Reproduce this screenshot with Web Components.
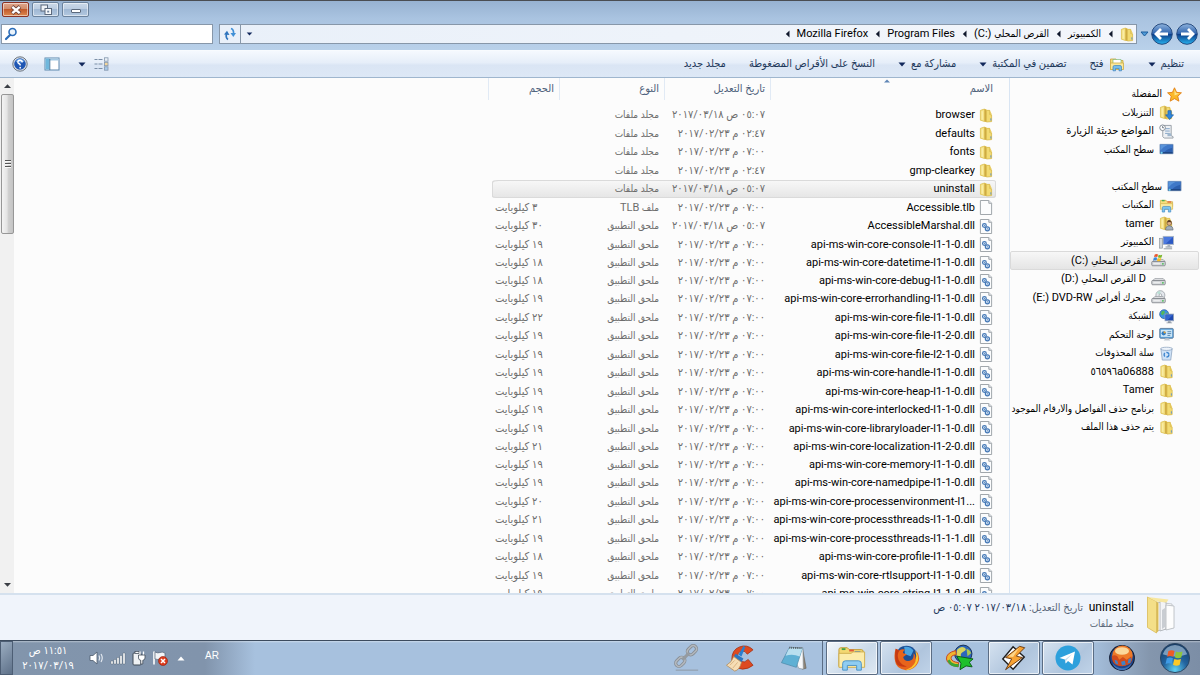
<!DOCTYPE html>
<html lang="ar" dir="rtl">
<head>
<meta charset="utf-8">
<title>uninstall</title>
<style>
  html, body { margin: 0; height: 100%; }
  body {
    overflow: hidden;
    font-family: Roboto, "DejaVu Sans Condensed", "DejaVu Sans", sans-serif;
    font-size: 11px;
    line-height: 18px;
    color: #000;
    --ar-size: 10px;
  }
</style>
</head>
<body>
<explorer-window></explorer-window>

<script>
const dllDoc = `<path d="M1.5.5h9l3 3v12h-12z" fill="#fbfcfd" stroke="#9aa0a6"/><path d="M10.5.5v3h3" fill="#e4e8ec" stroke="#9aa0a6"/>`;
const folderBody = `
  <path d="M1.500 2.500L6 1h2v1.500h3.500L13.500 6v8.500L8 15l-2-.5-4.500-1.500z" fill="#ecd068"/>
  <path d="M1.500 2.500L6 1v13.500L1.500 13z" fill="#f5e285" stroke="#dcc25c" stroke-width=".8"/>
  <path d="M6 1l2 1.500V15l-2-.5z" fill="#cfab42"/>
  <path d="M8 2.500h3.500V7L13.500 7.500v7L8 15z" fill="#f2da72" stroke="#d7ba50" stroke-width=".8"/>
  <path d="M3.500 3.500v9" stroke="#fbf0b4" stroke-width="1"/>
  <path d="M12.700 11v2.500" stroke="#5f93c9" stroke-width="1"/>`;
const monitor = `
  <path d="M1 2.500h14v10H1z" fill="#2c5fae" stroke="#7d97b8" stroke-width=".8"/>
  <path d="M1.500 3h13v3q-6 1-9 5h-4z" fill="#3f78c8"/>
  <path d="M1.500 3h8q-5 2-8 6z" fill="#5b95da"/>
  <path d="M1.500 11h13v1.200h-13z" fill="#1a3c74"/><circle cx="2.800" cy="11.500" r="1.200" fill="#6fd0ef"/>`;
const drive = `<path d="M2 9l2-2h9l2 2z" fill="#e8eaec" stroke="#8b9096" stroke-width=".7"/><rect x=".8" y="9" width="14.400" height="4.600" rx="1" fill="#d3d6d9" stroke="#757a80" stroke-width=".8"/><path d="M2.500 11.500h7" stroke="#f7f8f9"/><circle cx="12.700" cy="11.500" r=".9" fill="#3fbf4a"/>`;

const ICONS = {
  folder: ['0 0 15 16', folderBody],
  file: ['0 0 15 16', dllDoc],
  dll: ['0 0 15 16', dllDoc + `
    <circle cx="5.800" cy="7" r="2" fill="#e3eefa" stroke="#4377b5" stroke-width="1.300"/>
    <circle cx="9" cy="10.500" r="2.200" fill="#e3eefa" stroke="#4377b5" stroke-width="1.300"/>
    <circle cx="5.800" cy="7" r=".6" fill="#4377b5"/><circle cx="9" cy="10.500" r=".7" fill="#4377b5"/>`],
  star: ['0 0 16 16', `<path d="M8 .8l2.200 4.900 5.200.5-3.900 3.600 1.200 5.300L8 12.400l-4.700 2.700 1.200-5.300L.6 6.200l5.200-.5z" fill="#fbb829" stroke="#e07d12" stroke-width=".9"/><path d="M8 2.600l1.600 3.800 3.600.4L8 9z" fill="#fde58c"/>`],
  downloads: ['0 0 16 16', folderBody + `<path d="M9.500 6h3.500v4.500h2.500L11.300 15.500 7 10.500h2.500z" fill="#2f86dc" stroke="#165aa6" stroke-width=".7"/>`],
  recent: ['0 0 16 16', `<path d="M4 1.500h9v11l2 1v1.500H5.500L4 13.500z" fill="#eef1f4" stroke="#8d959e" stroke-width=".9"/><path d="M6.500 5h5M6.500 7.500h5M6.500 10h5" stroke="#7fa1c4"/><circle cx="3.800" cy="4" r="3" fill="#fff" stroke="#7e8791"/><path d="M3.800 2.300V4h1.500" fill="none" stroke="#44505e" stroke-width=".8"/><rect x="9" y="10" width="4" height="3" fill="#9fb6cc"/>`],
  desktop: ['0 0 16 16', monitor],
  libraries: ['0 0 16 16', `<path d="M1.500 2.500h6l1 1.500h6v5h-13z" fill="#f7df7e" stroke="#cfae45" stroke-width=".8"/><path d="M3 2h3v1.500H3z" fill="#4fae50"/><path d="M9 3.500h4V5H9z" fill="#e46a3c"/><path d="M1.500 6h13v6h-13z" fill="#fbeaa0" stroke="#d7b850" stroke-width=".8"/><path d="M3.500 15V10.500q0-1.500 1.500-1.500h6q1.500 0 1.500 1.500V15H10v-3H6v3z" fill="#7cc4ee" stroke="#4088c4" stroke-width=".7"/>`],
  user: ['0 0 16 16', folderBody + `<circle cx="11" cy="7.500" r="2.500" fill="#dfae84" stroke="#6c4c33" stroke-width=".7"/><path d="M8.700 7q.3-2.800 2.500-2.600T13.300 7q-2.300-1.200-4.600 0z" fill="#5d3d24"/><path d="M7 15q0-4.500 4-4.500T15 15z" fill="#a3afbb" stroke="#55616e" stroke-width=".6"/>`],
  computer: ['0 0 16 16', `<rect x="4.500" y="1.500" width="11" height="8.500" fill="#2b58c4" stroke="#aab6c6"/><path d="M5 2h10L7 9.500H5z" fill="#4b79de"/><path d="M9 10.500h3V12h2v1.500H7V12h2z" fill="#aab3bd"/><rect x=".7" y="3.500" width="3" height="10.500" fill="#cfd5db" stroke="#868f99" stroke-width=".7"/><path d="M5 14.700h9" stroke="#8a939d"/>`],
  cdrive: ['0 0 16 16', drive + `<path d="M4 1.500q2-1 3.500 0L6.700 4.300q-1.500-.8-3.500 0z" fill="#e8562a"/><path d="M8.200 1.800q1.800 1 3.800 0l-.8 3q-1.800.8-3.800-.2z" fill="#79b82c"/><path d="M3 5q2-.9 3.500 0L5.700 8q-1.500-.8-3.500 0z" fill="#3b88d8"/><path d="M7.200 5.400q1.800 1 3.800 0l-.8 3q-1.800.8-3.800-.2z" fill="#f8be22"/>`],
  drive: ['0 0 16 16', drive],
  dvd: ['0 0 16 16', `<circle cx="10" cy="5.500" r="4.800" fill="#e3e7ec" stroke="#969ca3" stroke-width=".8"/><path d="M10 5.500L6 3q1.500-2 4-2z" fill="#b9e0d5"/><circle cx="10" cy="5.500" r="1.400" fill="#fff" stroke="#8c9299" stroke-width=".7"/>` + drive],
  network: ['0 0 16 16', `<circle cx="5.500" cy="5.500" r="4.800" fill="#3d8fe0" stroke="#20599f" stroke-width=".7"/><path d="M3 2.500q2-1.500 3 0T5 5.500 3.500 7 2 5z" fill="#55b85a"/><path d="M7 5l2-1.500V6z" fill="#55b85a"/><rect x="6.500" y="5.500" width="9" height="7" fill="#1f49b0" stroke="#8fa0b8"/><path d="M7 6h8l-6 6H7z" fill="#3566d0"/><path d="M9.500 13h3v1.300h1.500v1H8v-1h1.500z" fill="#8e98a3"/>`],
  control: ['0 0 16 16', `<rect x=".8" y="1.500" width="14.400" height="10.500" rx="1" fill="#5aa3dc" stroke="#5f7f9f"/><rect x="2" y="3" width="12" height="7.500" fill="#cde7f8"/><circle cx="5" cy="6.700" r="2.300" fill="#2e7bc4"/><path d="M5 6.700V4.400a2.300 2.300 0 0 1 2.300 2.300z" fill="#f3a52a"/><path d="M9 5h4M9 7h4M9 9h3" stroke="#3a6f9f" stroke-width=".8"/><path d="M5 14.500l2-2.500h3l2 2.500z" fill="#c2cad2"/>`],
  bin: ['0 0 16 16', `<path d="M2 3l1.500 12h9L14 3z" fill="#cfe2f7" stroke="#8ba2bd" stroke-width=".8"/><ellipse cx="8" cy="3" rx="6.300" ry="1.700" fill="#eef4fb" stroke="#8ba2bd" stroke-width=".8"/><circle cx="8" cy="9.300" r="2.500" fill="none" stroke="#3f86cf" stroke-width="1.500" stroke-dasharray="3.600 1.600"/>`],
  openfolder: ['0 0 16 16', `<path d="M1.500 3h5.500l1 1.500h6v9H1.500z" fill="#f5dd7d" stroke="#c9a53d" stroke-width=".8"/><path d="M4 3.500h8V8H4z" fill="#fff" stroke="#6db06c" stroke-width=".6"/><path d="M1.500 7h13v6.500h-13z" fill="#fae89c" stroke="#cfae48" stroke-width=".8"/><path d="M4 14.800V11q0-1.500 1.500-1.500h5.500q1.500 0 1.500 1.500v3.800H10V12.500H6.500v2.300z" fill="#76bdea" stroke="#3d82bb" stroke-width=".7"/>`],
  search: ['0 0 14 14', `<circle cx="8.500" cy="5" r="3.500" fill="#eaf3fb" stroke="#2b6cb8" stroke-width="1.600"/><path d="M6 8L2 12" stroke="#2b6cb8" stroke-width="2.200" stroke-linecap="round"/>`],
  refresh: ['0 0 14 14', `<path d="M5 12.500Q2.500 11 3.500 6.500" fill="none" stroke="#2f74bd" stroke-width="1.700"/><path d="M1 7.500L4 3.800 6.500 8z" fill="#2f74bd"/><path d="M8 1.500q3 1 2.500 5.500" fill="none" stroke="#3f8fd6" stroke-width="1.700"/><path d="M7.500 6L10.300 10 13 6z" fill="#3f8fd6"/>`],
  help: ['0 0 16 16', `<circle cx="8" cy="8" r="7.200" fill="#dfe3e8" stroke="#6b7581"/><circle cx="8" cy="8" r="5.800" fill="#1f56b3"/><path d="M3.500 5.500a5 5 0 0 1 9 0q-4.500 2-9 0z" fill="#6ca3e6"/><path d="M10.300 6.300Q10 4.300 8 4.300T5.800 6Q6 7.300 7.200 7.800T8.200 9.500" fill="none" stroke="#fff" stroke-width="1.500"/><circle cx="8.200" cy="11.700" r=".9" fill="#fff"/>`],
  pane: ['0 0 16 14', `<rect x="1" y="1" width="14" height="12" fill="#fff" stroke="#5c87ad"/><path d="M1.500 1.500h13v2h-13z" fill="#a5c9e3"/><path d="M1.500 1.500h4v11h-4z" fill="#6fb7dc"/><path d="M5.800 2v11" stroke="#4b7b9f"/>`],
  views: ['0 0 15 14', `<g stroke="#7b8ea6"><path d="M.5 2.500h3M4.500 2.500h4M.5 7h3M4.500 7h4M.5 11.500h3M4.500 11.500h4"/></g><g fill="#e8eff6" stroke="#8497ad" stroke-width=".8"><rect x="10.500" y=".8" width="3.500" height="3.400"/><rect x="10.500" y="5.300" width="3.500" height="3.400" fill="#f3d59a"/><rect x="10.500" y="9.800" width="3.500" height="3.400" fill="#a9cbea"/></g>`],
  down: ['0 0 8 5', `<path d="M.5.5h7L4 4.500z" fill="#12285c"/>`],
  downBlue: ['0 0 9 6', `<path d="M1 1h7L4.500 5z" fill="#4f9bd8" stroke="#1d5d9c"/>`],
  crumb: ['0 0 5 8', `<path d="M4.500.5v7L.8 4z" fill="#10182c"/>`],
  back: ['0 0 24 24', `<defs><linearGradient id="g" x1="0" y1="0" x2="0" y2="1"><stop offset="0" stop-color="#8fb3dd"/><stop offset=".48" stop-color="#2f64ae"/><stop offset=".5" stop-color="#0b3a86"/><stop offset="1" stop-color="#28b2ee"/></linearGradient></defs><circle cx="12" cy="12" r="11" fill="#c8d8ea"/><circle cx="12" cy="12" r="10.300" fill="url(#g)" stroke="#234a80"/><path d="M11 7L6 12l5 5M6.500 12H18" fill="none" stroke="#fff" stroke-width="2.800"/>`],
  close: ['0 0 14 12', `<path d="M3 2.500l8 7M11 2.500l-8 7" stroke="#6d4038" stroke-width="4"/><path d="M3.300 2.800l7.400 6.400M10.700 2.800L3.300 9.200" stroke="#fff" stroke-width="2.400"/>`],
  restore: ['0 0 14 12', `<rect x="2" y="1" width="6.500" height="6" fill="#eef2f7" stroke="#5b697c"/><rect x="6" y="4.500" width="6.500" height="6" fill="#f7f9fb" stroke="#5b697c"/><rect x="8.200" y="6.700" width="2" height="1.800" fill="#6f8099"/>`],
  minimize: ['0 0 14 12', `<rect x="2.500" y="5.500" width="9" height="3" rx=".5" fill="#fff" stroke="#5b697c"/>`],
  bigFolder: ['0 0 30 38', `
    <path d="M9 6l17 2v24L10 35z" fill="#fff" stroke="#b9bdc2" stroke-width=".8"/>
    <path d="M14 5l6 1v27l-6 2z" fill="#f3f4f6" stroke="#a8adb3" stroke-width=".8"/>
    <path d="M20 9l8 1v22l-8 2z" fill="#fdfdfd" stroke="#b3b7bc" stroke-width=".8"/>
    <path d="M16 14l3-2v19l-3 2z" fill="#c9cdd2"/>
    <path d="M1.500 1l9 4.500V37l-9-5.500z" fill="#f4df88" stroke="#dcc062" stroke-width=".9"/>
    <path d="M1.500 1l21 2.500-2 3-10-1z" fill="#f7e7a0"/><path d="M10.500 6l2 .5V35l-2 2z" fill="#d8ba56"/>`],
  orb: ['0 0 34 34', `<defs><radialGradient id="o" cx=".5" cy=".9" r=".9"><stop offset="0" stop-color="#5fd2f4"/><stop offset=".45" stop-color="#23649f"/><stop offset="1" stop-color="#173a63"/></radialGradient></defs><circle cx="17" cy="17" r="15.500" fill="url(#o)" stroke="#2c4561"/><path d="M4 13a13.500 13.500 0 0 1 26 0q-13 5-26 0z" fill="#b9d2e6" opacity=".6"/>
    <path d="M10 9.500q3.500-1.700 6.500 0l-1.300 6.200q-3-1.500-6.500 0z" fill="#ee5b27"/><path d="M18 10.200q3 1.600 7 0L23.700 16.500q-3.500 1.600-7-.2z" fill="#8ec63d"/><path d="M8.300 17.200q3.500-1.600 6.500 0l-1.400 6.300q-3-1.600-6.400 0z" fill="#3f9be6"/><path d="M16.300 18q3.500 1.700 7 0l-1.400 6.400q-3.500 1.500-7-.2z" fill="#fdc928"/>`],
  foxblue: ['0 0 30 30', `<circle cx="15" cy="15" r="13.200" fill="#20458a" stroke="#131d33" stroke-width="1.200"/><circle cx="15.500" cy="12.500" r="11" fill="#ee7a28"/><ellipse cx="15" cy="7.500" rx="7.500" ry="4" fill="#fbd79a"/><path d="M4 13q3-2 6 0l2 4 4-3 4 3 5-4q1.500 6-2 8.500-7 4-14 1Q4 19.500 4 13z" fill="#d14a1b"/><path d="M7 17l3 1 1 4-3-1zM14 19l4-1 1 4-4 1zM22 16l3-1-1 5-3 1z" fill="#3f83c9"/><path d="M5 21q4 5 10 5t10-5q-2 7-10 7T5 21z" fill="#3d74bb"/>`],
  telegram: ['0 0 28 28', `<circle cx="14" cy="14" r="12.500" fill="#2da0dc"/><path d="M5.500 14L21 7.500 18.500 20.500 14 17l-2.300 2.500-.8-4z" fill="#fff"/><path d="M10.900 15.500L18.500 9.800 12.500 16l-.8 3.500z" fill="#c3dcec"/>`],
  winamp: ['0 0 30 30', `<path d="M14 3l12 11-12 13L3 16z" fill="#fff" stroke="#1d1d1d" stroke-width="1.500"/><path d="M21 2.500L6 14.500l6.500 1.500L6 27.500 24 14.500l-6.500-1.500L26.500 4z" fill="#f7a233" stroke="#5b2b07" stroke-width=".9"/><path d="M20.500 4L9 13.500l5 .5z" fill="#fcd58a"/>`],
  idm: ['0 0 32 30', `<circle cx="19.500" cy="10.500" r="9.300" fill="#2c66bb" stroke="#142b50"/><path d="M13 6q4-4.500 8-2 3 2-1 4t-3 5-5-1z" fill="#d8d35c"/><path d="M23 5q4 1 5 5l-4 3z" fill="#a8c553"/><path d="M11.500 7Q1 9.500 1.500 16T14 24.500l.5-4.500Q7 19 6.500 15.500T12 11.500z" fill="#f0b52e" stroke="#c7401e" stroke-width="1"/><path d="M2.500 18q3 7.500 12 6.500v-3q-8 0-9.500-5z" fill="#3aa637"/><path d="M12.500 13L30 16l-4 3.500 3 5-6.500-1L16 27.500 17 21z" fill="#1ec02c" stroke="#0a5a12"/>`],
  firefox: ['0 0 30 30', `<circle cx="15.500" cy="14" r="12" fill="#1c4f95"/><path d="M13 3q7-1 10 4l-3 6-6-2z" fill="#4aa3e0"/><path d="M4 5l4 2q2-2 6-1-3 2-2 4l4 1-4 3q1 5 7 4 5-1 4-8 3 2 2 7 3-4 1-10 5 7 2 13-4 8-13 8Q4 27 3 17 2 10 4 5z" fill="#e8641b"/><path d="M25 7q5 7 2 13-4 8-13 8 9-3 11-9t0-12z" fill="#fbc62f"/><path d="M4 5l4 2q-3 4-1 10 3 6 9 7Q4 26 3.500 16 3 9 4 5z" fill="#c63a12"/>`],
  explorer: ['0 0 32 30', `<path d="M2 6q0-2 2-2h7l2 2h13q2 0 2 2v16H2z" fill="#f3d872" stroke="#c19a35"/><path d="M5 4.500h4v2H5z" fill="#43a047"/><path d="M13 6h5v2h-5z" fill="#e25a3a"/><path d="M19 7.500h6v2h-6z" fill="#4a90d9"/><path d="M2 10h13l2-1.500h12.500V25H2z" fill="#fcecaa" stroke="#cfae4c"/><path d="M6 28v-7q0-3 3-3h14q3 0 3 3v7h-5v-5H11v5z" fill="#8fcdf2" stroke="#4a90c4"/>`],
  notepad: ['0 0 30 30', `<path d="M24 4l4 22-4 1z" fill="#8f8678" stroke="#5f594f" stroke-width=".6"/><path d="M10 3.500L24.500 4 25 27 20 26z" fill="#f7f8f9" stroke="#8b9298" stroke-width=".7"/><path d="M10 4l14 .5L17.500 25 1.500 20z" fill="#5fb0d4" stroke="#4a86a4" stroke-width=".7"/><path d="M10 4l14 .5-3 9Q14 10 6 12.500z" fill="#b9dfef"/><path d="M10 4l14 .5" stroke="#52575c" stroke-width="2" stroke-dasharray="1 1"/>`],
  ccleaner: ['0 0 30 30', `<path d="M28 6Q22 0 14 3T6 16q2 9 11 10 6 0 11-4l-5-6q-4 4-7 2-4-2-4-6t4-4.500q4-1 6 3z" fill="#dd4a21" stroke="#a52f0f" stroke-width=".8"/><path d="M20 3l-4 10-3-2 5-9z" fill="#2a7fd0"/><path d="M10 10l8 5-2 4-8-6z" fill="#2b76c2"/><path d="M8 13l8 6q-2 8-7 9L.500 22Q6 19 8 13z" fill="#f6ddb5" stroke="#b58b55" stroke-width=".8"/><path d="M4 22l5-5M7 25l5-6" stroke="#d3a972" stroke-width=".8"/>`],
  link: ['0 0 30 30', `<g fill="none" stroke="#878d94" stroke-width="3.400"><rect x="-5" y="-3.500" width="11" height="7" rx="3.500" transform="translate(21 7) rotate(-45)"/><rect x="-5" y="-3.500" width="11" height="7" rx="3.500" transform="translate(8.500 19.500) rotate(-45)"/></g><g fill="none" stroke="#b3b8bd" stroke-width="1.600"><rect x="-5" y="-3.500" width="11" height="7" rx="3.500" transform="translate(21 7) rotate(-45)"/><rect x="-5" y="-3.500" width="11" height="7" rx="3.500" transform="translate(8.500 19.500) rotate(-45)"/></g><path d="M11 17l7-7" stroke="#959ba1" stroke-width="3.400"/><path d="M4 28h24" stroke="#8d97a3" stroke-width="1"/>`],
  speaker: ['0 0 16 16', `<path d="M1 5.500h3L8 2v12L4 10.500H1z" fill="#fff" stroke="#4d5b6c" stroke-width=".8"/><path d="M10 5.500q1.500 2.500 0 5M12 4q2.500 4 0 8" fill="none" stroke="#e9eef4" stroke-width="1.100"/>`],
  signal: ['0 0 16 16', `<g fill="#fff" stroke="#4d5b6c" stroke-width=".4"><path d="M1 11h2v3H1zM4 9.500h2V14H4zM7 7.500h2V14H7zM10 5.500h2V14h-2zM13 3h2v11h-2z"/></g>`],
  plug: ['0 0 16 16', `<rect x="2" y="3" width="8" height="12" rx="1" fill="#eef1f4" stroke="#3f4a57"/><rect x="4" y="1.500" width="4" height="1.800" fill="#fff" stroke="#3f4a57" stroke-width=".7"/><path d="M9 1.500V5M12.500 1.500V5" stroke="#fff" stroke-width="1.300"/><path d="M7.500 5h6.500v3q0 2-2.200 2.300V14H9.800v-3.700Q7.500 10 7.500 8z" fill="#fff" stroke="#3f4a57" stroke-width=".8"/>`],
  flag: ['0 0 16 16', `<path d="M2 1.500v13" stroke="#fff" stroke-width="1.600"/><path d="M3 2q3 1.500 5 .5t5 .5v6.500q-3-1.500-5-.5T3 9z" fill="#f3f5f8" stroke="#566477" stroke-width=".7"/><circle cx="11" cy="11" r="4.500" fill="#dd3b1c" stroke="#8f1f0b" stroke-width=".6"/><path d="M9 9l4 4M13 9l-4 4" stroke="#fff" stroke-width="1.500"/>`],
  up: ['0 0 8 5', `<path d="M.5 4.500h7L4 .5z" fill="#fff"/>`],
  scrollUp: ['0 0 7 4', `<path d="M0 4h7L3.500.3z" fill="#3b3f45"/>`],
  scrollDown: ['0 0 7 4', `<path d="M0 0h7L3.500 3.700z" fill="#3b3f45"/>`],
  sort: ['0 0 6 4', `<path d="M0 3.500h6L3 .5z" fill="#5f86b5"/>`],
};

const define = (name, html, setup) => {
  const template = document.createElement('template');
  template.innerHTML = html;
  customElements.define(name, class extends HTMLElement {
    constructor() {
      super();
      this.attachShadow({ mode: 'open' }).append(template.content.cloneNode(true));
    }
    connectedCallback() { if (setup && !this.ready) { this.ready = true; setup(this, this.shadowRoot); } }
  });
};

/* <ui-icon name="…" w="16" h="16"> */
define('ui-icon', `<style>
  :host { display: inline-flex; flex: none; direction: ltr; }
  svg { display: block; }
</style>`, (el, root) => {
  const [box, body] = ICONS[el.getAttribute('name')] || ['0 0 1 1', ''];
  const w = el.getAttribute('w') || 16, h = el.getAttribute('h') || w;
  root.innerHTML += `<svg viewBox="${box}" width="${w}" height="${h}" aria-hidden="true">${body}</svg>`;
});

define('title-bar', `<style>
  :host { display: block; }
  div { display: flex; flex-direction: row; justify-content: flex-end; gap: 3px; padding: 1px 2px 0; border-top: 1px solid #4a4d52; }
  button { display: flex; align-items: center; justify-content: center; width: 27px; height: 15px; padding: 0;
    border: 1px solid #6b829c; border-radius: 2px; box-shadow: inset 0 0 0 1px #ffffff80;
    background: linear-gradient(#cbd9e9, #b9cbe0 48%, #a0b8d4 50%, #b3c8df); }
  .close { border-color: #8a3325; background: linear-gradient(#e0a68d, #d08a68 48%, #c25a2c 50%, #dd8a50); }
</style>
<div>
  <button aria-label="تصغير"><ui-icon name="minimize" w="14" h="12"></ui-icon></button>
  <button aria-label="استعادة"><ui-icon name="restore" w="14" h="12"></ui-icon></button>
  <button class="close" aria-label="إغلاق"><ui-icon name="close" w="14" h="12"></ui-icon></button>
</div>`);

define('address-bar', `<style>
  :host { display: flex; align-items: center; gap: 6px; padding: 5px 1px 4px 1px; }
  button { font: inherit; color: inherit; background: none; border: 0; padding: 0; display: flex; align-items: center; justify-content: center; }
  .travel { display: flex; align-items: center; gap: 1px; margin-inline-end: -3px; }
  .travel .fwd { transform: scaleX(-1); }
  .path, .search { display: flex; align-items: center; box-sizing: border-box; height: 20px; border: 1px solid #8797a9; }
  .path { flex: 1; background: linear-gradient(90deg, #e9f0f9, #f3f6fb); padding-inline-start: 2px; }
  ol { display: flex; align-items: center; list-style: none; margin: 0; padding: 0; flex: 1; }
  li { display: flex; align-items: center; gap: 7px; margin-inline-end: 7px; }
  .ar { font-size: var(--ar-size); }
  .path > button { width: 16px; height: 18px; }
  .path > .refresh { width: 21px; border-left: 0; border-right: 1px solid #8797a9; }
  .search { width: 212px; background: #fff; padding-inline-end: 2px; }
  input { flex: 1; min-width: 0; border: 0; outline: 0; background: none; font: inherit; padding: 0 4px; }
</style>
<div class="travel">
  <button class="fwd" aria-label="للأمام"><ui-icon name="back" w="24"></ui-icon></button>
  <button aria-label="للخلف"><ui-icon name="back" w="24"></ui-icon></button>
  <button class="recent" aria-label="المواقع الأخيرة"><ui-icon name="downBlue" w="9" h="6"></ui-icon></button>
</div>
<div class="path">
  <ol>
    <li><ui-icon name="folder" w="14" h="15"></ui-icon><ui-icon name="crumb" w="5" h="8"></ui-icon></li>
    <li><button class="ar">الكمبيوتر</button><ui-icon name="crumb" w="5" h="8"></ui-icon></li>
    <li><button><span><span class="ar">القرص المحلي</span> <bdi dir="ltr">(C:)</bdi></span></button><ui-icon name="crumb" w="5" h="8"></ui-icon></li>
    <li><button>Program Files</button><ui-icon name="crumb" w="5" h="8"></ui-icon></li>
    <li><button>Mozilla Firefox</button><ui-icon name="crumb" w="5" h="8"></ui-icon></li>
  </ol>
  <button aria-label="المواقع السابقة"><ui-icon name="down" w="7" h="4"></ui-icon></button>
  <button class="refresh" aria-label="تحديث"><ui-icon name="refresh" w="14"></ui-icon></button>
</div>
<label class="search">
  <input type="text" aria-label="بحث"><ui-icon name="search" w="14"></ui-icon>
</label>`);

define('command-bar', `<style>
  :host { display: flex; align-items: center; height: 26px; padding: 0 16px 0 12px; color: #1e395b;
    border-top: 1px solid #f8fbfe; border-bottom: 1px solid #9fb6ce; background: linear-gradient(#f5f9fe, #e6eef9 45%, #dae5f4 55%, #dde8f6); }
  button { display: flex; align-items: center; gap: 5px; font: inherit; color: inherit; background: none; border: 0; padding: 0; }
  .left { display: flex; align-items: center; margin-inline-start: auto; }
  .cmd { margin-inline-end: 23px; }
  .views { margin-inline: 8px 18px; }
  .pane { margin-inline-end: 16px; }
</style>
<button class="cmd">تنظيم<ui-icon name="down" w="8" h="5"></ui-icon></button>
<button class="cmd"><ui-icon name="openfolder" w="16"></ui-icon>فتح</button>
<button class="cmd">تضمين في المكتبة<ui-icon name="down" w="8" h="5"></ui-icon></button>
<button class="cmd">مشاركة مع<ui-icon name="down" w="8" h="5"></ui-icon></button>
<button class="cmd">النسخ على الأقراص المضغوطة</button>
<button class="cmd">مجلد جديد</button>
<div class="left">
  <button aria-label="طريقة العرض"><ui-icon name="views" w="15" h="14"></ui-icon></button>
  <button class="views" aria-label="خيارات العرض"><ui-icon name="down" w="8" h="5"></ui-icon></button>
  <button class="pane" aria-label="جزء المعاينة"><ui-icon name="pane" w="16" h="14"></ui-icon></button>
  <button aria-label="تعليمات"><ui-icon name="help" w="16"></ui-icon></button>
</div>`);

/* One entry of the navigation tree; depth sets the indent. */
define('tree-item', `<style>
  :host { display: block; height: 18px; }
  :host(:nth-child(even)) { height: 19px; }
  a { display: flex; align-items: center; gap: 5px; height: 100%; box-sizing: border-box; margin: 0 1px 0 0;
    padding-inline-start: 16px; color: #000; text-decoration: none; white-space: nowrap; border: 1px solid transparent; }
  :host([depth="2"]) a { padding-inline-start: 24px; }
  :host([depth="3"]) a { padding-inline-start: 32px; }
  :host([selected]) a { border-color: #dadada; border-radius: 2px; background: linear-gradient(#f7f7f7, #e5e5e5); }
</style><a href="#"><slot name="icon"></slot><span><slot></slot></span></a>`);

define('nav-tree', `<style>
  :host { display: block; overflow: hidden; background: #fcfcfc; border-left: 1px solid #d9e5f3; padding-top: 7px; }
  .gap { height: 18px; }
  .ar { font-size: var(--ar-size); }
</style><nav aria-label="جزء التنقل"></nav>`, (el, root) => {
  const ar = t => `<span class="ar">${t}</span>`;
  const items = [
    [1, 'star', ar('المفضلة')], [2, 'downloads', ar('التنزيلات')],
    [2, 'recent', 'المواضع حديثة الزيارة'], [2, 'desktop', ar('سطح المكتب')], null,
    [1, 'desktop', ar('سطح المكتب')], [2, 'libraries', ar('المكتبات')], [2, 'user', 'tamer'],
    [2, 'computer', ar('الكمبيوتر')],
    [3, 'cdrive', ar('القرص المحلي') + ' <bdi dir="ltr">(C:)</bdi>', true],
    [3, 'drive', 'D ' + ar('القرص المحلي') + ' <bdi dir="ltr">(D:)</bdi>'],
    [3, 'dvd', ar('محرك أقراص') + ' <bdi dir="ltr">DVD-RW</bdi> <bdi dir="ltr">(E:)</bdi>'],
    [2, 'network', ar('الشبكة')], [2, 'control', ar('لوحة التحكم')], [2, 'bin', ar('سلة المحذوفات')],
    [2, 'folder', '<bdi dir="ltr">٥٦٥٩٦a06888</bdi>'], [2, 'folder', 'Tamer'],
    [2, 'folder', ar('برنامج حذف الفواصل والارقام الموجود')], [2, 'folder', ar('يتم حذف هذا الملف')],
  ];
  root.querySelector('nav').innerHTML = items.map(it => it
    ? `<tree-item depth="${it[0]}"${it[3] ? ' selected' : ''}><ui-icon slot="icon" name="${it[1]}" w="15"></ui-icon>${it[2]}</tree-item>`
    : '<div class="gap"></div>').join('');
});

define('file-list', `<style>
  :host { display: block; overflow: hidden; background: #fcfcfc; padding-inline-start: 13px; min-width: 0; }
  table { border-collapse: separate; border-spacing: 0; table-layout: fixed; width: 508px; }
  col.name { width: 226px; } col.date { width: 106px; } col.type { width: 105px; } col.size { width: 71px; }
  th { height: 22px; padding: 0 5px 0 0; text-align: start; font-weight: 400; color: #4c607a;
    border-left: 1px solid #e1eaf5; position: relative; }
  th:first-child { padding-right: 3px; }
  th ui-icon { position: absolute; top: 1px; left: 50%; }
  tbody::before { content: ""; display: block; height: 6px; }
  td { height: 18px; padding: 0 5px 0 0; white-space: nowrap; color: #6d6d6d; line-height: 18px; overflow: hidden; }
  tr:nth-child(even) td { height: 19px; }
  tr:nth-child(10n) td { height: 18px; }
  td:first-child { padding-right: 3px; color: #000; }
  td:nth-child(3) { font-size: var(--ar-size); }
  td:last-child { text-align: end; padding: 0 0 0 3px; border-left: 4px solid transparent; background-clip: padding-box; }
  .cell { display: flex; align-items: center; gap: 4px; }
  .lat { font-size: 11px; }
  .on td { background: linear-gradient(#f8f8f8, #e5e5e5) padding-box; box-shadow: inset 0 1px #dadada, inset 0 -1px #dadada; }
  .on td:first-child { border-radius: 0 3px 3px 0; box-shadow: inset 0 1px #dadada, inset -1px -1px #dadada; }
  .on td:last-child { border-radius: 6px 0 0 6px / 2px 0 0 2px; box-shadow: inset 1px 1px #dadada, inset 0 -1px #dadada; }
</style>
<table>
  <colgroup><col class="name"><col class="date"><col class="type"><col class="size"></colgroup>
  <thead><tr><th>الاسم<ui-icon name="sort" w="6" h="4"></ui-icon></th><th>تاريخ التعديل</th><th>النوع</th><th>الحجم</th></tr></thead>
  <tbody></tbody>
</table>`, (el, root) => {
  const A = '٠٥:٠٧ ص ٢٠١٧/٠٣/١٨', B = '٠٢:٤٧ م ٢٠١٧/٠٢/٢٣', C = '٠٧:٠٠ م ٢٠١٧/٠٢/٢٣';
  const F = 'مجلد ملفات', D = 'ملحق التطبيق', kb = n => n + ' كيلوبايت';
  const api = (n, s) => ['dll', 'api-ms-win-core-' + n, C, D, kb(s)];
  const rows = [
    ['folder', 'browser', A, F, ''], ['folder', 'defaults', B, F, ''], ['folder', 'fonts', C, F, ''],
    ['folder', 'gmp-clearkey', B, F, ''], ['folder', 'uninstall', A, F, ''],
    ['file', 'Accessible.tlb', C, 'ملف <bdi class="lat">TLB</bdi>', kb('٣')],
    ['dll', 'AccessibleMarshal.dll', A, D, kb('٣٠')],
    api('console-l1-1-0.dll', '١٩'), api('datetime-l1-1-0.dll', '١٨'), api('debug-l1-1-0.dll', '١٨'),
    api('errorhandling-l1-1-0.dll', '١٩'), api('file-l1-1-0.dll', '٢٢'), api('file-l1-2-0.dll', '١٩'),
    api('file-l2-1-0.dll', '١٩'), api('handle-l1-1-0.dll', '١٩'), api('heap-l1-1-0.dll', '١٩'),
    api('interlocked-l1-1-0.dll', '١٩'), api('libraryloader-l1-1-0.dll', '١٩'), api('localization-l1-2-0.dll', '٢١'),
    api('memory-l1-1-0.dll', '١٩'), api('namedpipe-l1-1-0.dll', '١٩'), api('processenvironment-l1...', '٢٠'),
    api('processthreads-l1-1-0.dll', '٢١'), api('processthreads-l1-1-1.dll', '١٩'), api('profile-l1-1-0.dll', '١٨'),
    api('rtlsupport-l1-1-0.dll', '١٩'), api('string-l1-1-0.dll', '١٩'),
  ];
  root.querySelector('tbody').innerHTML = rows.map(([icon, name, date, type, size]) =>
    `<tr class="${name === 'uninstall' ? 'on' : ''}"><td><div class="cell"><ui-icon name="${icon}" w="14" h="15"></ui-icon><bdi dir="ltr">${name}</bdi></div></td><td>${date}</td><td>${type}</td><td>${size}</td></tr>`).join('');
});

define('scroll-bar', `<style>
  :host { display: flex; flex-direction: column; width: 14px; background: #f1f1f1; box-sizing: border-box; padding: 0 0 0 1px; }
  button { flex: none; height: 16px; border: 0; padding: 0; background: none; display: flex; align-items: center; justify-content: center; }
  .track { flex: 1; min-height: 0; }
  .thumb { display: flex; flex-direction: column; gap: 1px; align-items: center; justify-content: center; height: 29%; box-sizing: border-box;
    border: 1px solid #979797; border-radius: 2px; background: linear-gradient(90deg, #f4f4f4, #e4e4e4 45%, #cfcfcf 60%, #c4c4c4); }
  i { width: 6px; height: 1px; background: #555; border-bottom: 1px solid #f8f8f8; }
</style>
<button aria-label="لأعلى"><ui-icon name="scrollUp" w="7" h="4"></ui-icon></button>
<div class="track"><div class="thumb"><i></i><i></i><i></i></div></div>
<button aria-label="لأسفل"><ui-icon name="scrollDown" w="7" h="4"></ui-icon></button>`);

define('details-pane', `<style>
  :host { display: flex; align-items: flex-start; gap: 12px; box-sizing: border-box; height: 47px; padding: 1px 24px 0; background: #f0f4fb;
    border-top: 2px solid #d5e1ee; }
  .text { padding-top: 3px; line-height: 16px; }
  .text p { margin: 0; color: #5a6779; }
  .text .kind { font-size: var(--ar-size); }
  b { font-weight: 400; font-size: 12px; color: #000; margin-inline-end: 3px; }
  em { font-style: normal; color: #1e395b; }
</style>
<ui-icon name="bigFolder" w="30" h="38"></ui-icon>
<div class="text">
  <p><b>uninstall</b> تاريخ التعديل: <em>٢٠١٧/٠٣/١٨ ٠٥:٠٧ ص</em></p>
  <p class="kind">مجلد ملفات</p>
</div>`);

define('task-button', `<style>
  :host { display: block; }
  button { display: flex; align-items: center; justify-content: center; width: 52px; height: 34px; padding: 0; border: 1px solid transparent; background: none; border-radius: 2px; }
  :host([start]) button { width: 50px; }
  :host([open]) button { border-color: #5b6d84; box-shadow: inset 0 0 0 1px #ffffffb0; background: linear-gradient(135deg, #d5e2f0, #b0c5dd 60%, #c0d3e8); }
  :host([active]) button { background: linear-gradient(135deg, #f3f7fb, #c9d9e9 60%, #dfe9f3); }
  :host([stack]) { padding-left: 3px; border-left: 1px solid #5b6d84; }
</style><button><slot></slot></button>`, (el, root) => root.querySelector('button').setAttribute('aria-label', el.title));

define('task-bar', `<style>
  :host { display: flex; box-sizing: border-box; height: 35px; color: #fff; border-top: 1px solid #3c4b5e;
    background: linear-gradient(#ffffff66, #ffffff00 2px),
      linear-gradient(90deg, #8295ac, #8194ac 205px, #a7c1de 255px, #a7c1de calc(100% - 110px), #8496ad calc(100% - 50px), #7c8ea6); }
  .tasks { display: flex; gap: 2px; }
  .tray { display: flex; align-items: center; margin-inline-start: auto; }
  button { border: 0; background: none; padding: 0; color: inherit; font: inherit; display: flex; }
  .icons { display: flex; align-items: center; gap: 5px; margin: 0 9px 0 6px; direction: ltr; }
  .lang { font: 10px/18px "Liberation Sans", sans-serif; padding-bottom: 4px; }
  .up { margin-inline-start: 20px; }
  .clock { width: 70px; text-align: center; line-height: 15px; }
  .show { align-self: stretch; width: 13px; border: 1px solid #4d5e74; background: linear-gradient(135deg, #9badc1, #5d7088); }
</style>
<div class="tasks">
  <task-button start title="ابدأ"><ui-icon name="orb" w="32"></ui-icon></task-button>
  <task-button title="Firefox Developer"><ui-icon name="foxblue" w="28"></ui-icon></task-button>
  <task-button open title="Telegram"><ui-icon name="telegram" w="28"></ui-icon></task-button>
  <task-button open title="Winamp"><ui-icon name="winamp" w="28"></ui-icon></task-button>
  <task-button title="Internet Download Manager"><ui-icon name="idm" w="30" h="28"></ui-icon></task-button>
  <task-button open title="Firefox"><ui-icon name="firefox" w="28"></ui-icon></task-button>
  <task-button open active stack title="Explorer"><ui-icon name="explorer" w="30" h="28"></ui-icon></task-button>
  <task-button title="Notepad"><ui-icon name="notepad" w="28"></ui-icon></task-button>
  <task-button title="CCleaner"><ui-icon name="ccleaner" w="29"></ui-icon></task-button>
  <task-button title="Link"><ui-icon name="link" w="28"></ui-icon></task-button>
</div>
<div class="tray">
  <button class="lang">AR</button>
  <button class="up" aria-label="إظهار الرموز المخفية"><ui-icon name="up" w="8" h="5"></ui-icon></button>
  <div class="icons">
    <ui-icon name="speaker"></ui-icon><ui-icon name="signal"></ui-icon><ui-icon name="plug"></ui-icon><ui-icon name="flag"></ui-icon>
  </div>
  <div class="clock">١١:٥١ ص<br>٢٠١٧/٠٣/١٩</div>
  <button class="show" aria-label="إظهار سطح المكتب"></button>
</div>`);

define('explorer-window', `<style>
  :host { display: flex; flex-direction: column; height: 100vh; background: linear-gradient(#96b1d0, #a9c3e0 18px, #b9d1ea 50px); }
  .main { display: flex; flex: 1; min-height: 0; }
  nav-tree { width: 191px; flex: none; box-sizing: border-box; }
  file-list { flex: 1; }
</style>
<title-bar></title-bar>
<address-bar></address-bar>
<command-bar></command-bar>
<div class="main"><nav-tree></nav-tree><file-list></file-list><scroll-bar></scroll-bar></div>
<details-pane></details-pane>
<task-bar></task-bar>`);
</script>
</body>
</html>
